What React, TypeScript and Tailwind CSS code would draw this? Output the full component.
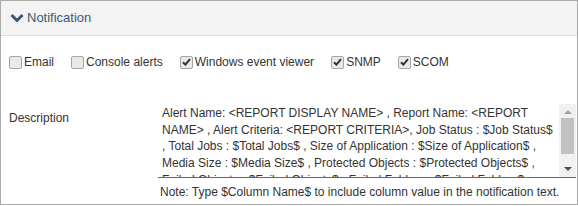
import React from "react";

const font = { fontFamily: '"Liberation Sans", Arial, sans-serif' };

function Box({ checked, label }: { checked: boolean; label: string }) {
  return (
    <label className="flex items-center gap-[2px] text-[12px] text-[#333]">
      <span className="w-[13px] h-[13px] rounded-[2px] border border-[#a6a6a6] bg-[#e9e9e9] flex items-center justify-center">
        {checked && (
          <svg width="9" height="8" viewBox="0 0 9 8">
            <path d="M1 4.2 L3.4 6.6 L8 1.2" stroke="#333" strokeWidth="2" fill="none" />
          </svg>
        )}
      </span>
      <span>{label}</span>
    </label>
  );
}

const lines = [
  "Alert Name: <REPORT DISPLAY NAME> , Report Name: <REPORT",
  "NAME> , Alert Criteria: <REPORT CRITERIA>, Job Status : $Job Status$",
  ", Total Jobs : $Total Jobs$ , Size of Application : $Size of Application$ ,",
  "Media Size : $Media Size$ , Protected Objects : $Protected Objects$ ,",
  "Failed Objects : $Failed Objects$ , Failed Folders : $Failed Folders$ ,",
];

export default function App() {
  return (
    <div style={font} className="w-[578px] h-[206px] bg-white">
      <div className="w-[578px] h-[205px] border border-[#aaa] flex flex-col overflow-hidden">
        <div className="shrink-0 h-[35px] bg-[#f3f3f3] border-b border-[#ddd] flex items-center pl-[9px] gap-[3px]">
          <svg width="14" height="10" viewBox="0 0 14 10">
            <path d="M1.5 2 L7 7.5 L12.5 2" stroke="#3f5670" strokeWidth="3" fill="none" />
          </svg>
          <span className="text-[13px] text-[#3f5a78]">Notification</span>
        </div>
        <div className="shrink-0 flex items-center gap-[17px] pl-[8px] mt-[17px] h-[18px]">
          <Box checked={false} label="Email" />
          <Box checked={false} label="Console alerts" />
          <Box checked={true} label="Windows event viewer" />
          <Box checked={true} label="SNMP" />
          <Box checked={true} label="SCOM" />
        </div>
        <div className="shrink-0 flex mt-[28px]">
          <div className="w-[157px] pl-[8px] pt-[10px] text-[12px] text-[#333]">Description</div>
          <div className="flex flex-col w-[418px]">
            <div className="flex h-[79px] border-b border-[#666]">
              <div className="flex-1 overflow-hidden pl-[4px] pt-[6px] text-[12px] leading-[16.7px] text-[#333]">
                {lines.map((l, i) => (
                  <div key={i} className="whitespace-nowrap">{l}</div>
                ))}
              </div>
              <div className="w-[17px] mt-[5px] bg-[#f1f1f1] flex flex-col items-center">
                <div className="h-[14px] flex items-center justify-center">
                  <svg width="8" height="5" viewBox="0 0 8 5"><path d="M0 5 L4 1 L8 5 Z" fill="#a3a3a3" /></svg>
                </div>
                <div className="w-[13px] h-[36px] bg-[#c1c1c1]" />
                <div className="flex-1" />
                <div className="h-[16px] flex items-center justify-center">
                  <svg width="8" height="5" viewBox="0 0 8 5"><path d="M0 0 L8 0 L4 4 Z" fill="#505050" /></svg>
                </div>
              </div>
            </div>
            <div className="pl-[2px] pt-[5px] text-[12px] text-[#333]">
              Note: Type $Column Name$ to include column value in the notification text.
            </div>
          </div>
        </div>
      </div>
    </div>
  );
}
